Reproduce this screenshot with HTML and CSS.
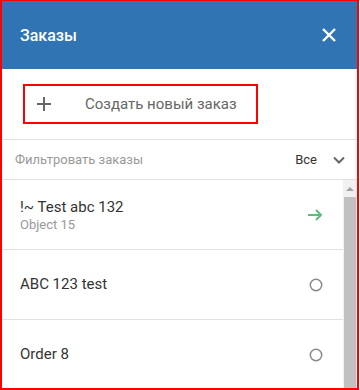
FILE: index.html
```html
<!DOCTYPE html>
<html lang="ru">

<head>
    <meta charset="UTF-8">
    <meta name="viewport" content="width=device-width, initial-scale=1.0">
    <title>Заказы</title>
    <link rel="stylesheet" href="styles.css">
</head>

<body>
    <div class="panel">
        <div class="panel-header">
            <span class="panel-title">Заказы</span>
            <svg class="close-icon" width="14" height="14" viewBox="0 0 14 14">
                <path d="M1 1L13 13M13 1L1 13" stroke="#fff" stroke-width="2.4" fill="none" />
            </svg>
        </div>

        <div class="create-row">
            <button class="create-btn">
                <svg width="14" height="14" viewBox="0 0 14 14">
                    <path d="M7 0V14M0 7H14" stroke="#666" stroke-width="2" fill="none" />
                </svg>
                <span>Создать новый заказ</span>
            </button>
        </div>

        <div class="filter-row">
            <span class="filter-label">Фильтровать заказы</span>
            <span class="filter-value">Все</span>
            <svg class="chevron" width="12" height="8" viewBox="0 0 12 8">
                <path d="M1 1.5L6 6.5L11 1.5" stroke="#666" stroke-width="2" fill="none" />
            </svg>
        </div>

        <div class="order-area">
            <div class="order-list">
                <div class="order">
                    <div class="order-text">
                        <div class="order-name">!~ Test abc 132</div>
                        <div class="order-sub">Object 15</div>
                    </div>
                    <svg width="16" height="12" viewBox="0 0 16 12">
                        <path d="M1 6H14M9 1L14 6L9 11" stroke="#5fba7d" stroke-width="2" fill="none" />
                    </svg>
                </div>
                <div class="order">
                    <div class="order-text">
                        <div class="order-name">ABC 123 test</div>
                    </div>
                    <svg width="14" height="14" viewBox="0 0 14 14">
                        <circle cx="7" cy="7" r="5.7" stroke="#888" stroke-width="1.5" fill="none" />
                    </svg>
                </div>
                <div class="order">
                    <div class="order-text">
                        <div class="order-name">Order 8</div>
                    </div>
                    <svg width="14" height="14" viewBox="0 0 14 14">
                        <circle cx="7" cy="7" r="5.7" stroke="#888" stroke-width="1.5" fill="none" />
                    </svg>
                </div>
            </div>
            <div class="scrollbar">
                <div class="scroll-up"></div>
                <div class="scroll-thumb"></div>
            </div>
        </div>
    </div>
</body>

</html>
```

FILE: styles.css
```css
body {
    margin: 0;
    font-family: Roboto, "Liberation Sans", sans-serif;
    background: #fff;
}

.panel {
    width: 359px;
    height: 390px;
    box-sizing: border-box;
    border: 2px solid #f00;
    border-top-width: 1px;
    display: flex;
    flex-direction: column;
    overflow: hidden;
}

.panel-header {
    height: 68px;
    flex-shrink: 0;
    background: #3074b4;
    display: flex;
    align-items: center;
    justify-content: space-between;
    padding: 0 21px 0 18px;
}

.panel-title {
    color: #fff;
    font-size: 16px;
    font-weight: 500;
}

.create-row {
    flex-shrink: 0;
    border-bottom: 1px solid #e2e2e2;
    padding: 15px 0 0 21px;
    box-sizing: border-box;
    height: 71px;
}

.create-btn {
    width: 235px;
    height: 40px;
    box-sizing: border-box;
    border: 2px solid #f00;
    background: #fff;
    display: flex;
    align-items: center;
    gap: 34px;
    padding: 0 0 0 12px;
    font-family: inherit;
    font-size: 15px;
    color: #666;
}

.filter-row {
    height: 40px;
    flex-shrink: 0;
    box-sizing: border-box;
    border-bottom: 1px solid #e2e2e2;
    display: flex;
    align-items: center;
    padding: 0 12px 0 13px;
}

.filter-label {
    flex: 1;
    font-size: 13px;
    color: #999;
}

.filter-value {
    font-size: 13px;
    color: #333;
    margin-right: 16px;
}

.order-area {
    flex: 1;
    display: flex;
    min-height: 0;
}

.order-list {
    flex: 1;
}

.order {
    height: 70px;
    box-sizing: border-box;
    border-bottom: 1px solid #e2e2e2;
    display: flex;
    align-items: center;
    justify-content: space-between;
    padding: 0 20px 0 18px;
}

.order-name {
    font-size: 15px;
    line-height: 19px;
    color: #333;
}

.order-sub {
    font-size: 13px;
    line-height: 15px;
    color: #999;
}

.scrollbar {
    width: 14px;
    background: #f1f1f1;
    display: flex;
    flex-direction: column;
}

.scroll-up {
    height: 17px;
    display: flex;
    justify-content: center;
    align-items: center;
}

.scroll-up::before {
    content: '';
    border-left: 4px solid transparent;
    border-right: 4px solid transparent;
    border-bottom: 4px solid #a3a3a3;
}

.scroll-thumb {
    flex: 1;
    margin: 0 1px;
    background: #c1c1c1;
}
```
